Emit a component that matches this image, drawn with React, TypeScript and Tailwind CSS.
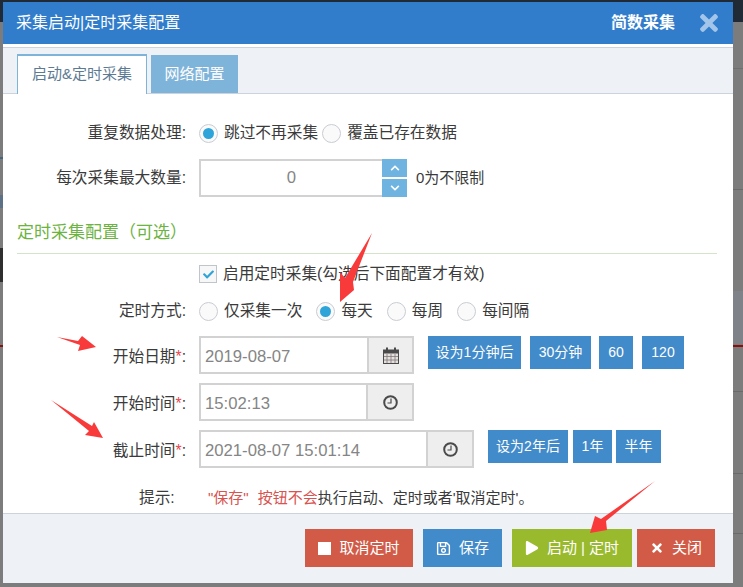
import type { ReactNode } from "react";
import { FaCheck, FaChevronDown, FaChevronUp, FaPlay, FaRegSave, FaTimes } from "react-icons/fa";

function Radio({ on, label, className = "" }: { on?: boolean; label: string; className?: string }) {
  return (
    <div className={`flex items-center ${className}`}>
      <div className="w-[19px] h-[19px] rounded-full border border-[#c8ccd2] bg-[#fafafa] flex items-center justify-center shrink-0">
        {on && <div className="w-[11px] h-[11px] rounded-full bg-[#2fa4d8]" />}
      </div>
      <span className="ml-[6px]">{label}</span>
    </div>
  );
}

function Row({ label, star, className = "", children }: { label: string; star?: boolean; className?: string; children: ReactNode }) {
  return (
    <div className={`flex ${className}`}>
      <div className="w-[183px] mr-[13px] text-right shrink-0 whitespace-nowrap">
        {label}
        {star && <span className="text-[#e5484d]">*</span>}:
      </div>
      {children}
    </div>
  );
}

function Field({ value, width, addon = "w-[48px]", icon }: { value: string; width: string; addon?: string; icon: ReactNode }) {
  return (
    <div className={`flex h-[38px] ${width} shrink-0`}>
      <div className="flex-1 border-2 border-r-0 border-[#d2d2d2] pl-[4px] leading-[37px] text-[#858585] text-[16.7px]">{value}</div>
      <div className={`${addon} border-2 border-[#d2d2d2] bg-[#eeeeee] flex items-center justify-center`}>{icon}</div>
    </div>
  );
}

function Quick({ label, className }: { label: string; className: string }) {
  return <div className={`h-[33px] bg-[#428bca] text-white text-[14px] text-center leading-[33px] ${className}`}>{label}</div>;
}

function FootBtn({ color, width, icon, label }: { color: string; width: string; icon: ReactNode; label: string }) {
  return (
    <div className={`h-[38px] ${color} ${width} text-white text-[15px] flex items-center justify-center gap-[8px]`}>
      {icon}
      <span>{label}</span>
    </div>
  );
}

function ClockIcon() {
  return (
    <svg width="15" height="15" viewBox="0 0 15 15" fill="none" stroke="#4a4a4a">
      <circle cx="7.5" cy="7.5" r="6.3" strokeWidth="2" />
      <path d="M8 3.5V8H4.5" strokeWidth="1.2" />
    </svg>
  );
}

function CalendarIcon() {
  return (
    <svg width="16" height="17" viewBox="0 0 16 17" fill="none">
      <rect x="0.5" y="3" width="15" height="13.5" fill="#e4e0de" stroke="#4a4a4a" />
      <rect x="0.5" y="3" width="15" height="3.5" fill="#4a4a4a" />
      <path d="M4 0.5V4.5M12 0.5V4.5" stroke="#4a4a4a" strokeWidth="2" />
      <path d="M4 7V16M8 7V16M12 7V16M1 9.5H15M1 13H15" stroke="#7f7a78" strokeWidth="0.8" />
    </svg>
  );
}

// Les bouts de page derrière la fenêtre, visibles sur les bords
function Backdrop() {
  return (
    <>
      <div className="absolute left-0 top-0 w-[743px] h-[22px] bg-[#1f2a36]" />
      <div className="absolute left-0 top-[248px] w-[3px] h-[34px] bg-[#2f2f2f]" />
      <div className="absolute left-0 top-[157px] w-[3px] h-[2px] bg-[#44657f]" />
      <div className="absolute left-0 top-[195px] w-[3px] h-[13px] bg-[#5c7086]" />
      <div className="absolute left-0 top-[345px] w-[3px] h-[2px] bg-[#8a0f0f]" />
      <div className="absolute left-[733px] top-[68px] w-[10px] h-px bg-[#6f6f6f]" />
      <div className="absolute left-[733px] top-[189px] w-[10px] h-px bg-[#6a6a6a]" />
      <div className="absolute left-[733px] top-[291px] w-[10px] h-[53px] bg-[#80828a]" />
      <div className="absolute left-[733px] top-[345px] w-[10px] h-[2px] bg-[#8a0f0f]" />
      <div className="absolute left-[733px] top-[391px] w-[10px] h-px bg-[#6a6a6a]" />
      <div className="absolute left-[733px] top-[473px] w-[10px] h-px bg-[#6a6a6a]" />
      <div className="absolute left-[733px] top-[533px] w-[10px] h-px bg-[#6a6a6a]" />
    </>
  );
}

export default function App() {
  return (
    <div className="relative w-[743px] h-[587px] overflow-hidden bg-[#7c7c7c] pt-[2px] pl-[3px] text-[15.7px] text-[#3b3b3b]" style={{ fontFamily: '"Liberation Sans", "Noto Sans CJK SC", sans-serif' }}>
      <Backdrop />
      <div className="relative w-[730px] h-[581px] bg-white flex flex-col">
        {/* en-tête */}
        <div className="h-[42px] bg-[#317dcc] flex items-center text-white text-[16px] shrink-0">
          <div className="ml-[13px]">采集启动|定时采集配置</div>
          <div className="ml-auto font-bold">简数采集</div>
          <FaTimes className="ml-[21px] mr-[11px] text-[26px] text-[#a3c5ea]" />
        </div>

        {/* onglets */}
        <div className="mt-[3px] h-[47px] bg-[#eef1f6] border-y border-[#ccd3dc] flex items-end pl-[14px] shrink-0">
          <div className="w-[130px] h-[40px] -mb-px bg-white border-x border-t-2 border-[#7fb4da] border-b-0 text-[#5c7a94] text-[15px] text-center leading-[36px]">启动&定时采集</div>
          <div className="w-[87px] h-[38px] ml-[4px] bg-[#7fb4da] text-white text-[15px] text-center leading-[38px]">网络配置</div>
        </div>

        {/* formulaire */}
        <div className="flex-1 pt-[28px] leading-[22px]">
          <Row label="重复数据处理" className="items-center">
            <Radio on label="跳过不再采集" />
            <Radio label="覆盖已存在数据" className="ml-[4px]" />
          </Row>

          <Row label="每次采集最大数量" className="items-center mt-[15px]">
            <div className="w-[183px] h-[38px] border-2 border-r-0 border-[#d2d2d2] text-center leading-[34px] text-[#858585] text-[16.7px]">0</div>
            <div className="w-[25px] h-[38px] flex flex-col justify-between">
              <div className="h-[18px] bg-[#6fb3e0] flex items-center justify-center text-white text-[10px]"><FaChevronUp /></div>
              <div className="h-[18px] bg-[#6fb3e0] flex items-center justify-center text-white text-[10px]"><FaChevronDown /></div>
            </div>
            <span className="ml-[9px] text-[15px]">0为不限制</span>
          </Row>

          <div className="mt-[25px] ml-[14px] mr-[16px] h-[32px] border-b border-[#d5e3c8] text-[#6cb33f] text-[17px] leading-[22px]">定时采集配置（可选）</div>

          <div className="flex items-center mt-[9px] ml-[196px]">
            <div className="w-[18px] h-[18px] border border-[#bfc5cc] bg-[#f7f7f7] flex items-center justify-center text-[#2fa4d8] text-[11px]"><FaCheck /></div>
            <span className="ml-[6px]">启用定时采集(勾选后下面配置才有效)</span>
          </div>

          <Row label="定时方式" className="items-center mt-[15px]">
            <Radio label="仅采集一次" />
            <Radio on label="每天" className="ml-[14px]" />
            <Radio label="每周" className="ml-[14px]" />
            <Radio label="每间隔" className="ml-[14px]" />
          </Row>

          <Row label="开始日期" star className="mt-[14px] h-[38px] leading-[42px]">
            <Field value="2019-08-07" width="w-[215px]" addon="w-[47px]" icon={<CalendarIcon />} />
            <div className="flex ml-[14px]">
              <Quick label="设为1分钟后" className="w-[93px]" />
              <Quick label="30分钟" className="w-[61px] ml-[9px]" />
              <Quick label="60" className="w-[34px] ml-[8px]" />
              <Quick label="120" className="w-[42px] ml-[9px]" />
            </div>
          </Row>

          <Row label="开始时间" star className="mt-[9px] h-[38px] leading-[42px]">
            <Field value="15:02:13" width="w-[215px]" icon={<ClockIcon />} />
          </Row>

          <Row label="截止时间" star className="mt-[9px] h-[38px] leading-[42px]">
            <Field value="2021-08-07 15:01:14" width="w-[275px]" icon={<ClockIcon />} />
            <div className="flex ml-[14px]">
              <Quick label="设为2年后" className="w-[80px]" />
              <Quick label="1年" className="w-[39px] ml-[5px]" />
              <Quick label="半年" className="w-[45px] ml-[4px]" />
            </div>
          </Row>

          <div className="flex mt-[19px]">
            <div className="ml-[136px] w-[69px]">提示:</div>
            <div className="text-[15px]">
              <span className="text-[#d9534f]">"保存"<span className="ml-[9px]">按钮不会</span></span>执行启动、定时或者'取消定时'。
            </div>
          </div>
        </div>

        {/* pied */}
        <div className="h-[70px] bg-[#eef1f6] border-t border-[#ccd3dc] flex items-start justify-end pt-[15px] pr-[18px] shrink-0">
          <FootBtn color="bg-[#d15b47]" width="w-[108px]" icon={<div className="w-[13px] h-[13px] bg-white" />} label="取消定时" />
          <FootBtn color="bg-[#428bca] ml-[10px]" width="w-[79px]" icon={<FaRegSave className="text-[15px]" />} label="保存" />
          <FootBtn color="bg-[#9aba2e] ml-[10px]" width="w-[120px]" icon={<FaPlay className="text-[14px]" />} label="启动 | 定时" />
          <FootBtn color="bg-[#d15b47] ml-[5px]" width="w-[78px]" icon={<FaTimes className="text-[14px]" />} label="关闭" />
        </div>
      </div>

      {/* flèches rouges posées sur la capture */}
      <svg className="absolute inset-0 pointer-events-none" width="743" height="587" viewBox="0 0 743 587">
        <g fill="#f93a3a">
          <polygon points="372,233 353,282 354,290 340,302 340,272 345,278" />
          <polygon points="57,337 78,341 82,336 96,347 78,351 80,345" />
          <polygon points="51,400 92,426 94,422 103,438 85,435 89,431" />
          <polygon points="655,481 606,521 607,530 590,533 595,516 601,519" />
        </g>
      </svg>
    </div>
  );
}
